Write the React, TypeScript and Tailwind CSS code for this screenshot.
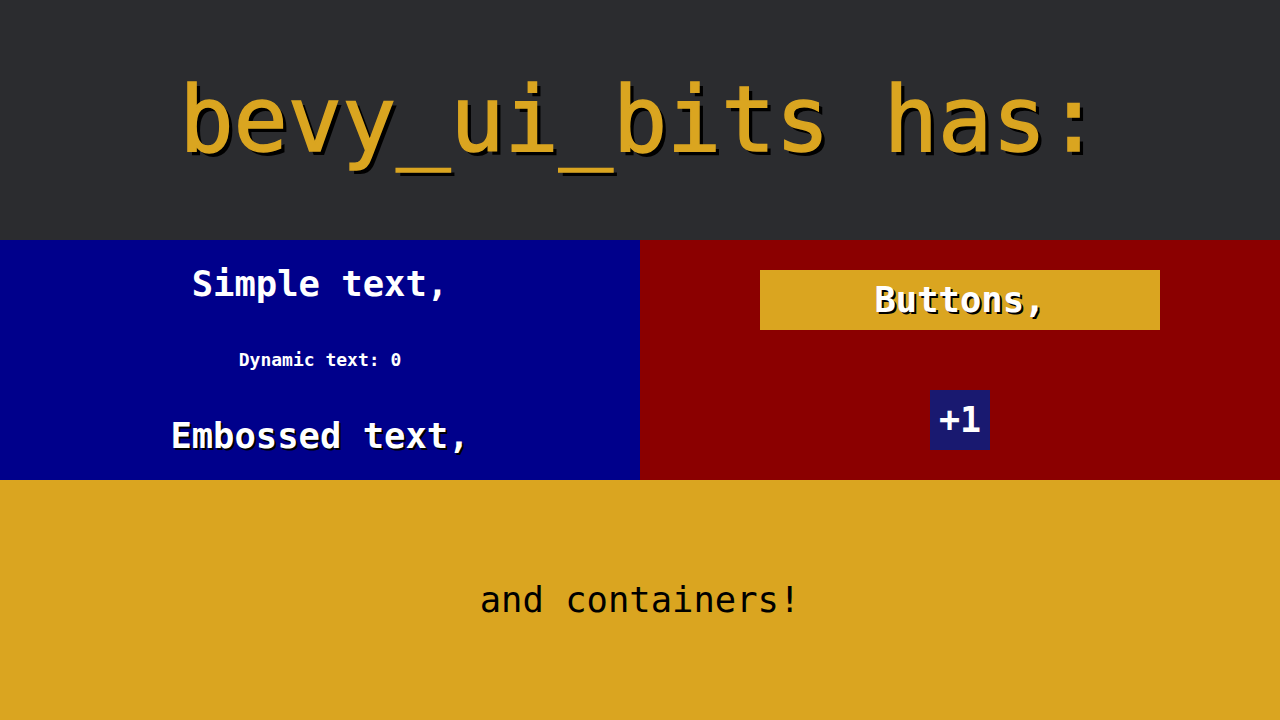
import React from "react";

const mono = { fontFamily: '"DejaVu Sans Mono", "Liberation Mono", monospace' };

export default function App() {
  return (
    <div className="w-[1280px] h-[720px] flex flex-col" style={mono}>
      <div className="h-[240px] bg-[#2b2c2f] flex items-center justify-center">
        <div className="text-[90px] leading-none text-[#daa520] [-webkit-text-stroke:1.5px_#daa520] [text-shadow:4px_4px_0_#000]">
          bevy_ui_bits has:
        </div>
      </div>
      <div className="h-[240px] flex">
        <div className="w-[640px] bg-[#00008b] flex flex-col items-center justify-between py-[26px] text-white font-bold">
          <div className="text-[35.5px] leading-[36px]">Simple text,</div>
          <div className="text-[18px] leading-none">Dynamic text: 0</div>
          <div className="text-[35.5px] leading-[36px] [text-shadow:2px_2px_0_#000]">Embossed text,</div>
        </div>
        <div className="w-[640px] bg-[#8b0000] flex flex-col items-center justify-around">
          <div className="w-[400px] h-[60px] bg-[#daa520] flex items-center justify-center text-white font-bold text-[35.5px] leading-none [text-shadow:2px_2px_0_#000]">
            Buttons,
          </div>
          <div className="w-[60px] h-[60px] bg-[#191970] flex items-center justify-center text-white font-bold text-[35px] leading-none">
            +1
          </div>
        </div>
      </div>
      <div className="h-[240px] bg-[#daa520] flex items-center justify-center">
        <div className="text-[35.5px] leading-none text-black">and containers!</div>
      </div>
    </div>
  );
}
